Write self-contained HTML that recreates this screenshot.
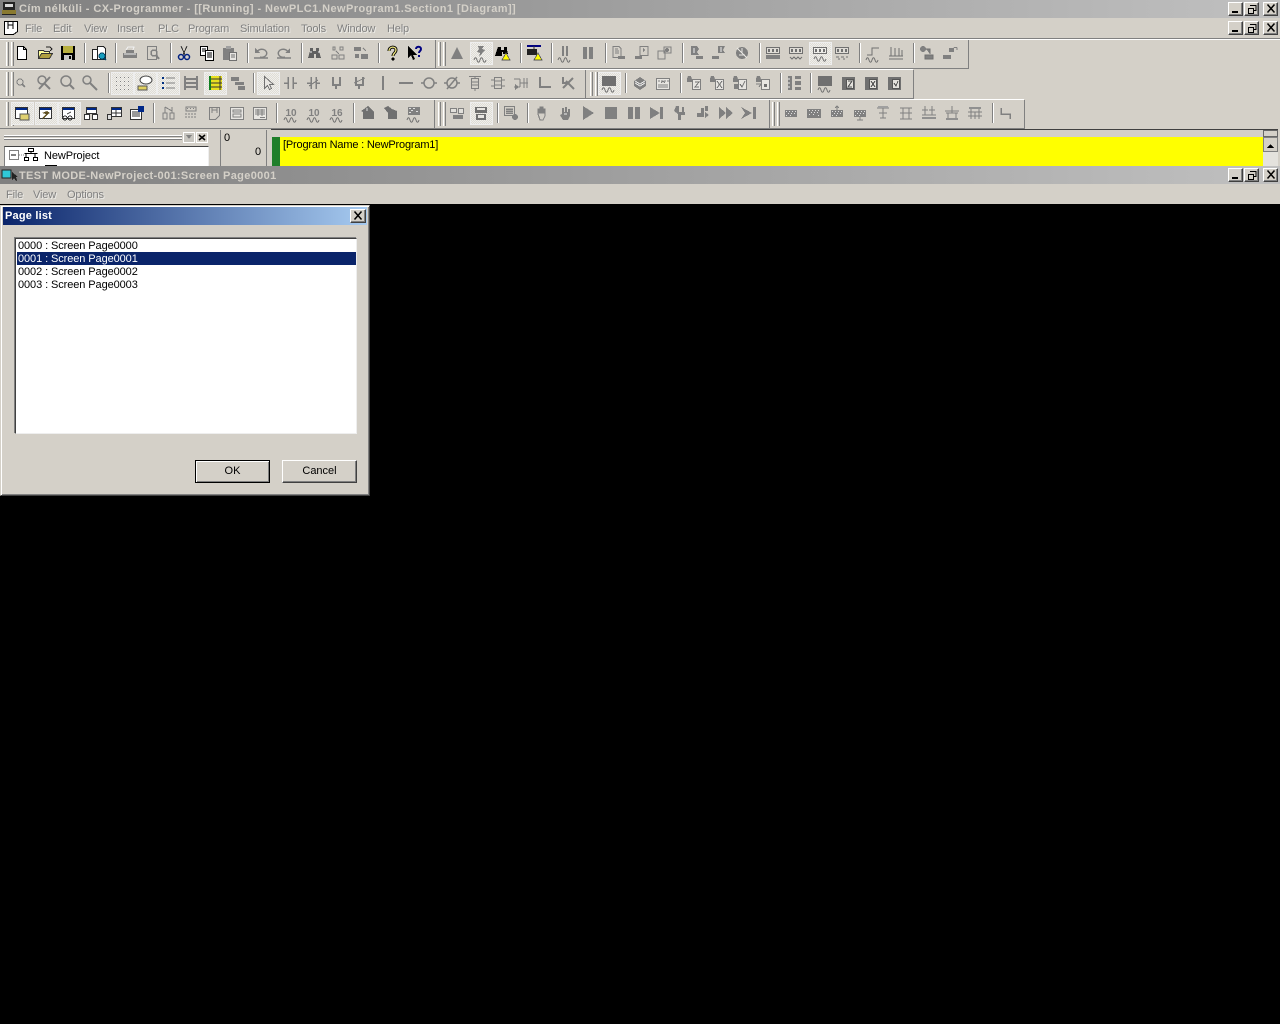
<!DOCTYPE html>
<html><head><meta charset="utf-8"><title>CX-Programmer</title>
<style>
html,body{margin:0;padding:0;background:#000;width:1280px;height:1024px;overflow:hidden}
body{position:relative;font-family:"Liberation Sans",sans-serif;font-size:11px;color:#000}
div{position:absolute;box-sizing:border-box}
.t{white-space:nowrap;line-height:13px;margin-top:1px}
.l{white-space:nowrap;line-height:13px;letter-spacing:-.09px;margin-top:1px}
.m{white-space:nowrap;line-height:13px;color:#808080;text-shadow:1px 1px 0 #ecebe7;letter-spacing:-.15px;margin-top:1px}
.tb{font-weight:bold;color:#d4d0c8;white-space:nowrap;line-height:14px}
.wb{width:15px;height:14px;background:#d4d0c8;border:1px solid;border-color:#fff #404040 #404040 #fff;box-shadow:inset -1px -1px 0 #808080}
.btn{background:#d4d0c8;text-align:center;line-height:21px}
svg{position:absolute;left:0;top:0}
</style></head><body>
<div style="left:0;top:0;width:1280px;height:204px;background:#d4d0c8"></div>
<div style="left:0;top:0;width:1280px;height:18px;background:linear-gradient(90deg,#808080,#c0c0c0)"></div>
<div class="tb" style="left:19px;top:2px;letter-spacing:.42px">Cím nélküli - CX-Programmer - [[Running] - NewPLC1.NewProgram1.Section1 [Diagram]]</div>
<div class="m" style="left:25px;top:22px">File</div><div class="m" style="left:53px;top:22px">Edit</div><div class="m" style="left:84px;top:22px">View</div><div class="m" style="left:117px;top:22px">Insert</div><div class="m" style="left:158px;top:22px">PLC</div><div class="m" style="left:188px;top:22px">Program</div><div class="m" style="left:240px;top:22px">Simulation</div><div class="m" style="left:301px;top:22px">Tools</div><div class="m" style="left:337px;top:22px">Window</div><div class="m" style="left:387px;top:22px">Help</div>
<div style="left:0;top:38px;width:1280px;height:1px;background:#808080"></div>
<div style="left:0;top:39px;width:1280px;height:1px;background:#fff"></div>
<div style="left:0;top:166px;width:1280px;height:18px;background:linear-gradient(90deg,#808080,#c0c0c0)"></div>
<div class="tb" style="left:19px;top:169px;letter-spacing:.34px">TEST MODE-NewProject-001:Screen Page0001</div>
<div class="m" style="left:6px;top:188px">File</div><div class="m" style="left:33px;top:188px">View</div><div class="m" style="left:67px;top:188px">Options</div>
<div style="left:220px;top:130px;width:47px;height:36px;border-left:1px solid #808080;border-right:1px solid #808080"></div>
<div class="t" style="left:224px;top:131px">0</div><div class="t" style="left:255px;top:145px">0</div>
<div style="left:272px;top:137px;width:8px;height:29px;background:#1f7f2a"></div>
<div style="left:280px;top:137px;width:984px;height:29px;background:#ff0"></div>
<div style="left:271px;top:129px;width:1007px;height:1px;background:#404040"></div>
<div class="t" style="left:283px;top:138px;color:#000;letter-spacing:-.18px">[Program Name : NewProgram1]</div>
<div style="left:4px;top:146px;width:205px;height:20px;background:#fff;border-top:1px solid #404040;border-left:1px solid #808080;border-right:1px solid #eee"></div>
<div class="l" style="left:44px;top:149px">NewProject</div>
<div style="left:0;top:204px;width:1280px;height:820px;background:#000"></div>
<div style="left:0;top:205px;width:370px;height:291px;background:#d4d0c8;border:1px solid;border-color:#d4d0c8 #404040 #404040 #d4d0c8;box-shadow:inset 1px 1px 0 #fff,inset -1px -1px 0 #808080"></div>
<div style="left:3px;top:207px;width:364px;height:18px;background:linear-gradient(90deg,#0a246a,#a6caf0)"></div>
<div class="tb" style="left:5px;top:209px;color:#fff;letter-spacing:.2px">Page list</div>
<div class="wb" style="left:350px;top:209px;width:16px"></div>
<div style="left:15px;top:238px;width:342px;height:196px;background:#fff;border:1px solid;border-color:#404040 #eee #eee #404040;box-shadow:-1px -1px 0 #808080"></div>
<div style="left:17px;top:252px;width:339px;height:13px;background:#0a246a"></div>
<div class="l" style="left:18px;top:239px">0000 : Screen Page0000</div>
<div class="l" style="left:18px;top:252px;color:#fff">0001 : Screen Page0001</div>
<div class="l" style="left:18px;top:265px">0002 : Screen Page0002</div>
<div class="l" style="left:18px;top:278px">0003 : Screen Page0003</div>
<div class="btn" style="left:195px;top:460px;width:75px;height:23px;border:1px solid #000;box-shadow:inset 1px 1px 0 #fff,inset -1px -1px 0 #808080">OK</div>
<div class="btn" style="left:282px;top:460px;width:75px;height:23px;border:1px solid;border-color:#fff #404040 #404040 #fff;box-shadow:inset -1px -1px 0 #808080;line-height:21px">Cancel</div>
<div class="wb" style="left:1228px;top:2px"></div><div class="wb" style="left:1244px;top:2px"></div><div class="wb" style="left:1263px;top:2px"></div>
<div class="wb" style="left:1228px;top:21px"></div><div class="wb" style="left:1244px;top:21px"></div><div class="wb" style="left:1263px;top:21px"></div>
<div class="wb" style="left:1228px;top:168px"></div><div class="wb" style="left:1244px;top:168px"></div><div class="wb" style="left:1263px;top:168px"></div>

<svg width="1280" height="1024" viewBox="0 0 1280 1024" shape-rendering="crispEdges">
<defs>
<pattern id="dither" width="2" height="2" patternUnits="userSpaceOnUse"><rect width="2" height="2" fill="#dedcd6"/><rect width="1" height="1" fill="#f0efeb"/><rect x="1" y="1" width="1" height="1" fill="#f0efeb"/></pattern>
<g id="wmin"><rect x="3" y="9" width="6" height="2" fill="#000"/></g>
<g id="wres"><path d="M5 3.500h6v5h-2M3.500 6.500h5v5h-5z" fill="none" stroke="#000"/><path d="M5 3h6v1H5zM3 6h6v1H3z"/></g>
<g id="wx"><path d="M3.500 2.500l7 8M10.500 2.500l-7 8" stroke="#000" stroke-width="1.500" fill="none" shape-rendering="auto"/></g>
<g id="print"><path d="M4 5h8v3H4zM1 8h14v5H1z" fill="#808080"/><path d="M2 9h12M4 5l2-3h6l-1 3" stroke="#eee" fill="none"/></g>
<g id="prev"><path d="M2.500 1.500h9v13h-9z" fill="#d4d0c8" stroke="#808080"/><circle cx="9" cy="8" r="3" fill="none" stroke="#808080" stroke-width="1.500"/><path d="M11 10l3 4" stroke="#808080" stroke-width="2"/></g>
<g id="undo"><path d="M4 7a5 4 0 1 1 3 5M1 13h14" fill="none" stroke="#808080" stroke-width="1.400" shape-rendering="auto"/><path d="M2 3v5h5z" fill="#808080"/></g>
<g id="redo"><path d="M12 7a5 4 0 1 0-3 5M1 13h14" fill="none" stroke="#808080" stroke-width="1.400" shape-rendering="auto"/><path d="M14 3v5H9z" fill="#808080"/></g>
<g id="bino"><path d="M3 3h3v3h3V3h3v3l2 7H9V9H7v4H1l2-7z" fill="#606060"/><path d="M3 7h2M11 7h2" stroke="#eee"/></g>
<g id="r1"><path d="M3 2h2v3H3zM10 2h3v3h-3zM2 10h5v4H2zM9 10h5v4H9z" fill="none" stroke="#808080"/><path d="M6 6l3 3" stroke="#808080"/></g>
<g id="r2"><path d="M1 2h7v4H1zM8 9h7v5H8zM2 9h4v4H2z" fill="#808080"/><path d="M10 3l3 3" stroke="#808080"/></g>
<g id="tri"><path d="M8 2l6 12H2z" fill="#808080"/></g>
<g id="wave"><path d="M1 15c1-3 2-3 3 0s2 3 3 0 2-3 3 0 2 3 3 0" fill="none" stroke="#707070" shape-rendering="auto"/></g>
<g id="bolt"><path d="M5 1h6L9 4l3 1-6 7 1-4-3-1 2-3z" fill="#808080"/><use href="#wave"/></g>
<g id="pause2"><path d="M5 1h2v10H5zM9 1h2v10H9z" fill="#808080"/><use href="#wave"/></g>
<g id="pp"><path d="M3 2h4v12H3zM9 2h4v12H9z" fill="#808080"/></g>
<g id="d1"><path d="M3 1.500h6l2 2v9H3z" fill="none" stroke="#808080"/><path d="M5 4h3M5 6h4M5 8h4" stroke="#808080"/><path d="M8 11h7v3H8z" fill="#808080"/></g>
<g id="d2"><path d="M6 1.500h8v9H6z" fill="none" stroke="#808080"/><path d="M1 11h7v3H1zM9 3l2 2-2 2z" fill="#808080"/></g>
<g id="d3"><path d="M1 6h7v8H1zM7 2h7v6H7z" fill="none" stroke="#808080"/><circle cx="10" cy="5" r="2" fill="#808080"/></g>
<g id="s1"><path d="M3 1h6l2 3-2 3 2 3H3z" fill="#808080"/><path d="M8 11h7v3H8z" fill="#808080"/><path d="M6 3v5" stroke="#eee"/></g>
<g id="s2"><path d="M7 1h7l-2 4 2 3H7z" fill="#808080"/><path d="M1 11h7v3H1z" fill="#808080"/><path d="M10 2v5" stroke="#eee"/></g>
<g id="s3"><circle cx="8" cy="8" r="6" fill="#808080"/><path d="M3 3l10 10M5 10h6M8 3v5" stroke="#e8e6e2"/></g>
<g id="rb"><path d="M1 2h14v7H1z" fill="#fff" opacity=".25"/><path d="M1.500 2.500h13v6h-13z" fill="none" stroke="#707070"/><path d="M3 4h2v3H3zM7 4h2v3H7zM11 4h2v3h-2z" fill="#707070"/></g>
<g id="rb1"><use href="#rb"/><path d="M1 10h14v4H1z" fill="#808080"/></g>
<g id="rb2"><use href="#rb"/><path d="M2 12l2 2 2-2 2 2 2-2 2 2 2-2" fill="none" stroke="#707070" shape-rendering="auto"/></g>
<g id="rb3"><use href="#rb"/><use href="#wave" transform="translate(1 -1)"/></g>
<g id="rb4"><use href="#rb"/><path d="M2 12h3M7 12h3M12 12h2M4 14h2M9 14h2" stroke="#707070"/></g>
<g id="step"><path d="M2 10h5V3h7" fill="none" stroke="#707070"/><use href="#wave"/></g>
<g id="steps"><path d="M3 2v9M7 3v8M11 3v8M14 5v6M1 11h14" stroke="#707070" fill="none"/><path d="M1 14h14" stroke="#707070"/></g>
<g id="lock1"><circle cx="4" cy="4" r="3" fill="#808080"/><path d="M7 4h4v5M6 10h8v4H6z" stroke="#707070" fill="#808080"/></g>
<g id="lock2"><path d="M7 3h5v4H7z" fill="#808080"/><path d="M12 3a2 2 0 0 1 3 0v2" stroke="#808080" fill="none"/><path d="M1 10h8v4H1z" fill="#808080"/></g>
<g id="mag" fill="none" stroke="#808080"><circle cx="7" cy="7" r="3"/><path d="M9 9l3 3" stroke-width="2"/></g>
<g id="magx" fill="none" stroke="#808080" stroke-width="1.500" shape-rendering="auto"><circle cx="6" cy="5" r="4"/><path d="M3 14L14 2M8 8l6 6" stroke-width="2"/></g>
<g id="magl" fill="none" stroke="#808080" stroke-width="1.500" shape-rendering="auto"><circle cx="7" cy="6" r="5"/><path d="M11 10l4 4" stroke-width="2"/></g>
<g id="magm" fill="none" stroke="#808080" stroke-width="1.500" shape-rendering="auto"><circle cx="5" cy="5" r="4"/><path d="M8 8l7 7" stroke-width="2"/></g>
<g id="grid" fill="#808080"><path d="M2 2h1v1H2zM6 2h1v1H6zM10 2h1v1h-1zM14 2h1v1h-1zM2 6h1v1H2zM6 6h1v1H6zM10 6h1v1h-1zM14 6h1v1h-1zM2 10h1v1H2zM6 10h1v1H6zM10 10h1v1h-1zM14 10h1v1h-1zM2 14h1v1H2zM6 14h1v1H6zM10 14h1v1h-1zM14 14h1v1h-1z"/></g>
<g id="cmt"><ellipse cx="9" cy="5" rx="6" ry="4" fill="#fff" stroke="#444" shape-rendering="auto"/><path d="M1 11h9v4H1z" fill="#e0d060" stroke="#555"/></g>
<g id="lst"><path d="M2 2h2v2H2zM2 7h2v2H2zM2 12h2v2H2z" fill="#003080"/><path d="M6 3h9M6 8h9M6 13h9" stroke="#808080"/></g>
<g id="lad"><path d="M2 1v14M14 1v14M2 4h12M2 8h12M2 12h12" stroke="#808080" stroke-width="2"/></g>
<g id="lady"><path d="M2 1h2v14H2z" fill="#108020"/><path d="M4 1h11v14H4z" fill="#e8e020"/><path d="M4 4h11M4 8h11M4 12h11" stroke="#333"/><path d="M13 1v14" stroke="#333"/></g>
<g id="tree"><path d="M1 2h8v4H1zM5 7h9v3H5zM8 11h7v4H8z" fill="#808080"/></g>
<g id="arrow"><path d="M4.500 1.500v12l3-3 2 4 2-1-2-4h4z" fill="#e8e6e2" stroke="#707070"/></g>
<g id="no"><path d="M5 2v12M10 2v12M1 8h4M10 8h4" stroke="#808080" stroke-width="1.500"/></g>
<g id="nc"><use href="#no"/><path d="M3 11l9-6" stroke="#808080"/></g>
<g id="hno"><path d="M4 2v9M11 2v9M4 10h7M7 10v4" stroke="#808080" stroke-width="2"/></g>
<g id="hnc"><use href="#hno"/><path d="M2 8l11-5" stroke="#808080"/></g>
<g id="vl"><path d="M7 1h2v14H7z" fill="#808080"/></g>
<g id="hl"><path d="M1 8h14" stroke="#808080" stroke-width="2"/></g>
<g id="coil" fill="none" stroke="#808080" stroke-width="1.500" shape-rendering="auto"><circle cx="8" cy="8" r="5"/><path d="M0 8h3M13 8h3"/></g>
<g id="coiln" fill="none" stroke="#808080" stroke-width="1.500" shape-rendering="auto"><circle cx="8" cy="8" r="5"/><path d="M0 8h3M13 8h3M3 14L13 2"/></g>
<g id="inst"><path d="M4.500 3.500h7v10h-7zM4 7h8M4 10h8M2 1.500h12M8 1v2M8 14v2" fill="none" stroke="#808080"/></g>
<g id="inst2"><path d="M4.500 2.500h7v11h-7zM4 6h8M4 10h8M1 5h3M1 11h3M12 5h3M12 11h3" fill="none" stroke="#808080"/></g>
<g id="branch"><path d="M1 4h6M7 4v8M7 8h8M1 12h6" stroke="#808080" fill="none"/><path d="M11 3v10M14 3v10" stroke="#808080"/><path d="M2 9l4 3-4 3z" fill="#808080"/></g>
<g id="corner"><path d="M3 2v10h11" stroke="#808080" stroke-width="2" fill="none"/></g>
<g id="delx"><path d="M3 2v6h4M3 13l10-10M6 6l8 8" stroke="#808080" stroke-width="2" fill="none" shape-rendering="auto"/></g>
<g id="stk"><path d="M2 6l6-4 6 4v5l-6 4-6-4z" fill="#808080"/><path d="M3 8l5 3 5-3M3 6l5 3 5-3" stroke="#eee" fill="none"/></g>
<g id="tbl"><path d="M1.500 3.500h13v11h-13z" fill="#e8e6e2" stroke="#808080"/><path d="M3 6h2M6 6h2M9 6h2M12 6h2M3 10h10M3 12h10" stroke="#808080"/><path d="M6 8l2-2 2 2" stroke="#808080" fill="none"/></g>
<g id="bx1"><path d="M2 1h3l1 3v3H1V4z" fill="#808080"/><path d="M6.500 4.500h8v10h-8z" fill="#e8e6e2" stroke="#808080"/></g>
<g id="bz"><use href="#bx1"/><path d="M9 7h4l-4 5h4" stroke="#707070" fill="none"/></g>
<g id="bxx"><use href="#bx1"/><path d="M8 6l5 7M13 6l-5 7" stroke="#707070"/></g>
<g id="bck"><use href="#bx1"/><path d="M8 9l2 3 3-6" stroke="#707070" fill="none"/><path d="M2 9h4v5H2z" fill="#808080"/></g>
<g id="bmn"><use href="#bx1"/><path d="M9 9h3v3H9z" fill="#707070"/><path d="M1 9h5M4 12l2-3" stroke="#808080"/></g>
<g id="cols"><path d="M2 1h4v14H2z" fill="#808080"/><path d="M9 1h6v3H9zM9 6h6v4H9zM9 12h6v3H9z" fill="#808080"/><path d="M3 3v2M3 7v2M3 11v2" stroke="#eee"/></g>
<g id="dark1"><path d="M1 1h14v10H1z" fill="#707070"/><use href="#wave"/></g>
<g id="darkz"><path d="M2 2h13v13H2z" fill="#707070"/><path d="M6.500 4.500h7v9h-7z" fill="#e4e2dd" stroke="#555"/><path d="M8 6h4l-4 6h4" stroke="#555" fill="none"/></g>
<g id="darkx"><path d="M2 2h13v13H2z" fill="#707070"/><path d="M6.500 4.500h7v9h-7z" fill="#e4e2dd" stroke="#555"/><path d="M8 6l4 6M12 6l-4 6" stroke="#555"/></g>
<g id="darkc"><path d="M2 2h13v13H2z" fill="#707070"/><path d="M6.500 4.500h7v9h-7z" fill="#e4e2dd" stroke="#555"/><path d="M8 8l2 3 2-5" stroke="#555" fill="none"/></g>
<g id="win"><path d="M1.500 2.500h12v11h-12z" fill="#fff" stroke="#333"/><path d="M2 3h11v2H2z" fill="#002888"/></g>
<g id="winf"><use href="#win"/><path d="M6 9h9v6H6z" fill="#e0d070" stroke="#555"/></g>
<g id="winh"><use href="#win"/><path d="M4 8l5-2 3 2-2 1-5 5-1-1 4-4z" fill="#605020"/></g>
<g id="wing"><use href="#win"/><circle cx="4" cy="13" r="2" fill="none" stroke="#333"/><circle cx="9" cy="13" r="2" fill="none" stroke="#333"/><path d="M6 9l4-2" stroke="#333"/></g>
<g id="wins"><path d="M3.500 2.500h10v6h-10z" fill="#fff" stroke="#333"/><path d="M4 3h9v2H4z" fill="#002888"/><path d="M1.500 9.500h5v5h-5zM9.500 9.500h5v5h-5z" fill="#fff" stroke="#333"/></g>
<g id="wint"><path d="M5.500 2.500h10v9h-10z" fill="#fff" stroke="#333"/><path d="M6 3h9v2H6z" fill="#002888"/><path d="M10 5v6M6 8h9" stroke="#333"/><path d="M1.500 9.500h4v5h-4z" fill="#ddd" stroke="#333"/></g>
<g id="winp"><path d="M1.500 4.500h11v10h-11z" fill="#fff" stroke="#333"/><path d="M3 7h8M3 9h8M3 11h8" stroke="#333"/><path d="M9 1h6v6H9z" fill="#002888"/></g>
<g id="conn"><path d="M3 8h4v6H3zM10 8h4v6h-4z" fill="none" stroke="#808080"/><path d="M5 2v6M12 2v6M5 2l7 4" stroke="#808080"/></g>
<g id="wv2"><path d="M3 2h10v4H3z" fill="none" stroke="#808080"/><path d="M4 3h1v1H4zM7 3h1v1H7zM10 3h1v1h-1z" fill="#808080"/><path d="M2 9h12M2 12h12" stroke="#808080" stroke-dasharray="2 1"/></g>
<g id="pg"><path d="M3.500 2.500h10v8l-4 4h-6z" fill="none" stroke="#808080" stroke-width="1"/><path d="M6 2v6M6 5h5M11 2v6" stroke="#808080"/></g>
<g id="frm"><path d="M1.500 2.500h13v12h-13z" fill="#e8e6e2" stroke="#808080"/><path d="M4 5h8v2H4zM4 9h8v3H4z" fill="none" stroke="#808080"/></g>
<g id="frm2"><path d="M1.500 2.500h13v12h-13z" fill="#e8e6e2" stroke="#808080"/><path d="M3 5h10M3 7h10M3 9h10M6 4v7M10 4v7" stroke="#808080"/><path d="M8 12h5v1H8z" fill="#808080"/></g>
<g id="house"><path d="M8 1l6 6v7H3V7l-2-1 3-2z" fill="#707070"/><path d="M7 3v3" stroke="#ddd"/></g>
<g id="house2"><path d="M1 3l4-2 4 3 5 2v8H5V8z" fill="#707070"/></g>
<g id="scat"><path d="M2 2h12v8H2z" fill="#808080"/><path d="M3 3h2v1H3zM7 3h2v1H7zM5 5h2v1H5zM10 6h2v1h-2zM3 7h2v1H3z" fill="#ddd"/><use href="#wave"/></g>
<g id="h1"><path d="M1 3h7v5H1zM9 3h6v6H9zM4 10h10v4H4z" fill="#808080"/><path d="M2 4h5v3H2zM10 4h4v4h-4z" fill="#e2e0db"/></g>
<g id="h2"><path d="M2 2h12v6H2zM3 9h10v6H3z" fill="#707070"/><path d="M4 3h8v2H4zM5 10h6v3H5z" fill="#e8e6e2"/></g>
<g id="lsc"><path d="M1.500 1.500h10v9h-10z" fill="none" stroke="#808080"/><path d="M3 4h7M3 6h7M3 8h7" stroke="#808080" stroke-width="1.500"/><circle cx="12" cy="12" r="3" fill="#808080"/></g>
<g id="hand"><path d="M4 9V4h1v4h1V2h1v6h1V2h1v6h1V4h1v7l-2 4H6z" fill="none" stroke="#808080"/></g>
<g id="handd"><path d="M5 3h2v4h1V2h2v5h1V4h2v7l-2 4H6l-3-5 2-1z" fill="#808080"/><path d="M7 9h3" stroke="#eee"/></g>
<g id="play"><path d="M3 1l11 7-11 7z" fill="#808080"/></g>
<g id="stop"><path d="M2 2h12v12H2z" fill="#808080"/></g>
<g id="pau"><path d="M2 2h5v12H2zM9 2h5v12H9z" fill="#808080"/></g>
<g id="snext"><path d="M1 2l10 6-10 6zM11 2h3v12h-3z" fill="#808080"/></g>
<g id="sf1"><path d="M4 1h3v6h6v3H9v5H6V9L2 6z" fill="#808080"/><path d="M10 2h2v5h-2z" fill="#808080"/></g>
<g id="sf2"><path d="M2 8h4V3h3v9H2zM10 1h3v5h-3zM10 7l4 3-4 3z" fill="#808080"/></g>
<g id="ff"><path d="M1 2l7 6-7 6zM8 2l7 6-7 6z" fill="#808080"/></g>
<g id="tobar"><path d="M0 2l11 6L0 14l4-6zM12 2h3v12h-3z" fill="#808080"/></g>
<g id="bk1"><path d="M2 5h12v7H2z" fill="#808080"/><path d="M3 6h1v1H3zM6 6h1v1H6zM9 6h1v1H9zM12 6h1v1h-1zM5 8h1v1H5zM8 8h1v1H8zM11 8h1v1h-1zM3 10h1v1H3zM7 10h1v1H7z" fill="#ddd"/></g>
<g id="bk2"><path d="M1 4h14v9H1z" fill="#808080"/><path d="M3 5h1v1H3zM6 5h1v1H6zM9 5h1v1H9zM12 5h1v1h-1zM5 7h1v1H5zM8 7h1v1H8zM11 7h1v1h-1zM3 9h1v1H3zM7 9h1v1H7zM12 10h1v1h-1z" fill="#ddd"/></g>
<g id="bk3"><use href="#bk1"/><path d="M8 1v4M6 3l2-2 2 2" stroke="#808080" fill="none"/></g>
<g id="bk4"><use href="#bk1"/><path d="M8 12v3M5 15h6" stroke="#808080" fill="none"/></g>
<g id="t1"><path d="M2 3h12M8 3v10M4 8h8M5 13h6" stroke="#808080" fill="none"/><path d="M3 1h10v2H3z" fill="#a0a0a0"/></g>
<g id="t2"><path d="M2 3h12M5 3v5M11 3v5M2 8h12M5 8v6M11 8v6M2 14h12" stroke="#808080" fill="none"/></g>
<g id="t3"><path d="M4 1v9M11 1v9M1 5h6M8 5h6M1 10h14" stroke="#808080" fill="none"/><path d="M1 12h14v2H1z" fill="#909090"/></g>
<g id="t4"><path d="M8 1v7M2 8h12M4 8v6M12 8v6M1 6h14" stroke="#808080" fill="none"/><path d="M2 13h12v2H2z" fill="#909090"/></g>
<g id="t5"><path d="M2 2h12v2H2z" fill="#909090"/><path d="M4 4v10M12 4v10M1 7h14M1 11h14M8 7v7" stroke="#808080" fill="none"/></g>
<g id="retn"><path d="M3 3v6h9v5" stroke="#808080" fill="none" stroke-width="1.500"/></g>
<g id="new"><path d="M3.500 1.500h6l3 3v10h-9z" fill="#fff" stroke="#000"/><path d="M9.500 1.500v3h3" fill="none" stroke="#000"/></g>
<g id="open"><path d="M1.500 5.500h5l1 1h5v7h-11z" fill="#ffff99" stroke="#333"/><path d="M1.500 13.500l3-5h11l-3 5z" fill="#b0a040" stroke="#333"/><path d="M9 2h4l2 2-2 2" fill="none" stroke="#222"/></g>
<g id="save"><path d="M1 1h14v14H1z" fill="#000"/><path d="M3 1h10v7H3z" fill="#b8b040"/><path d="M4 10h8v5H4z" fill="#c8c8c8"/><path d="M9 11h2v3H9z" fill="#000"/></g>
<g id="find"><path d="M1.500 4.500h6v10h-6z" fill="#fff" stroke="#222"/><path d="M6.500 1.500h6l2 2v11h-8z" fill="#fff" stroke="#222"/><circle cx="11" cy="11" r="3" fill="#18a0c0" stroke="#046"/><path d="M13 13l2 2" stroke="#046" stroke-width="2"/></g>
<g id="cut"><path d="M5 1l4 9M11 1l-4 9" stroke="#333" fill="none"/><circle cx="5" cy="12" r="2.500" fill="none" stroke="#002080" stroke-width="1.500" shape-rendering="auto"/><circle cx="11" cy="12" r="2.500" fill="none" stroke="#002080" stroke-width="1.500" shape-rendering="auto"/></g>
<g id="copy"><path d="M1.500 1.500h7v9h-7z" fill="#fff" stroke="#000"/><path d="M6.500 5.500h8v10h-8z" fill="#fff" stroke="#000"/><path d="M3 4h4M3 6h3M8 8h5M8 10h5M8 12h5" stroke="#000"/></g>
<g id="paste"><path d="M1 3h11v12H1z" fill="#808080"/><path d="M4 1h5v3H4z" fill="#a0a0a0"/><path d="M7.500 7.500h7v8h-7z" fill="#e8e6e2" stroke="#707070"/><path d="M9 10h4M9 12h4" stroke="#707070"/></g>
<g id="help"><path d="M5 6c0-5 7-5 7-1 0 3-3 3-3 6" fill="none" stroke="#000" stroke-width="3" shape-rendering="auto"/><path d="M5 6c0-5 7-5 7-1 0 3-3 3-3 6" fill="none" stroke="#f0e880" stroke-width="1.300" shape-rendering="auto"/><circle cx="9" cy="14" r="1.500"/></g>
<g id="what"><path d="M1 1v12l3-3 2 5 2-1-2-4h4z" fill="#000"/><path d="M9 4c0-3 5-3 5 0 0 2-2 2-2 4" fill="none" stroke="#000080" stroke-width="2" shape-rendering="auto"/><path d="M11 10h2v2h-2z" fill="#000080"/></g>
<g id="binoy"><path d="M3 2h3v3h3V2h3v3l1 4H8V7H7v4H0l2-6z" fill="#000"/><path d="M11 8l4 7H7z" fill="#ff0" stroke="#555" stroke-width=".8"/></g>
<g id="plcy"><path d="M1 1h14" stroke="#000080" stroke-width="2"/><path d="M8 1v3" stroke="#333"/><path d="M1 4h10v6H1z" fill="#222"/><path d="M12 8l4 7H8z" fill="#ff0" stroke="#555" stroke-width=".8"/></g>
</defs>

<g>
<path d="M3 2h12v8H3z" fill="#222"/><path d="M5 4h8v3H5z" fill="#d8d8d8"/><path d="M2 10h14v4H2z" fill="#8a7a30"/><path d="M2 14h14v1H2z" fill="#222"/>
<path d="M4.500 21.500h13v10l-4 3h-9z" fill="#fff" stroke="#000"/><path d="M8 22v7M8 25h5M13 22v7" stroke="#000"/>
</g>
<use href="#wmin" x="1229" y="2"/><use href="#wres" x="1245" y="2"/><use href="#wx" x="1264" y="2"/>
<use href="#wmin" x="1229" y="21"/><use href="#wres" x="1245" y="21"/><use href="#wx" x="1264" y="21"/>
<use href="#wmin" x="1229" y="168"/><use href="#wres" x="1245" y="168"/><use href="#wx" x="1264" y="168"/>
<use href="#wx" x="351" y="209"/>
<path d="M2 170h9v8H2z" fill="#30c8d8" stroke="#222"/><path d="M12 172v8l2-2 2 3 1-1-1-3h2z" fill="#222"/>

<g fill="none">
<path d="M0 68.500h968M0 98.500h913M0 128.500h1024" stroke="#808080"/>
<path d="M0 69.500h913M0 99.500h1024" stroke="#fff"/>
<path d="M968.500 40v29M913.500 70v29M1024.500 100v29" stroke="#808080"/>
<path d="M435.500 40v28M585.500 70v28M434.500 100v28M769.500 100v28" stroke="#808080"/>
</g>
<g fill="none">
<path d="M6.500 42v24M11.500 42v24M6.500 72v24M11.500 72v24M6.500 102v24M11.500 102v24M438.500 42v24M443.500 42v24M590.500 72v24M595.500 72v24M438.500 102v24M443.500 102v24M772.500 102v24M777.500 102v24" stroke="#fff" stroke-width="1"/>
<path d="M8.500 42v24M13.500 42v24M8.500 72v24M13.500 72v24M8.500 102v24M13.500 102v24M440.500 42v24M445.500 42v24M592.500 72v24M597.500 72v24M440.500 102v24M445.500 102v24M774.500 102v24M779.500 102v24" stroke="#808080" stroke-width="1"/>
</g>
<g fill="none" stroke="#808080">
<path d="M84.500 43v20M115.500 43v20M170.500 43v20M247.500 43v20M301.500 43v20M378.500 43v20M520.500 43v20M551.500 43v20M605.500 43v20M682.500 43v20M759.500 43v20M859.500 43v20M913.500 43v20"/>
<path d="M108.500 73v20M253.500 73v20M625.500 73v20M680.500 73v20M780.500 73v20M810.500 73v20"/>
<path d="M153.500 103v20M276.500 103v20M353.500 103v20M497.500 103v20M527.500 103v20M992.500 103v20"/>
</g>
<g fill="none" stroke="#fff">
<path d="M85.500 43v20M116.500 43v20M171.500 43v20M248.500 43v20M302.500 43v20M379.500 43v20M521.500 43v20M552.500 43v20M606.500 43v20M683.500 43v20M760.500 43v20M860.500 43v20M914.500 43v20"/>
<path d="M109.500 73v20M254.500 73v20M626.500 73v20M681.500 73v20M781.500 73v20M811.500 73v20"/>
<path d="M154.500 103v20M277.500 103v20M354.500 103v20M498.500 103v20M528.500 103v20M993.500 103v20"/>
</g>
<g fill="url(#dither)" stroke="#eee">
<rect x="470.500" y="42.500" width="22" height="22"/><rect x="809.500" y="42.500" width="22" height="22"/>
<rect x="111.500" y="72.500" width="22" height="22"/><rect x="134.500" y="72.500" width="22" height="22"/><rect x="157.500" y="72.500" width="22" height="22"/><rect x="204.500" y="72.500" width="22" height="22"/><rect x="257.500" y="72.500" width="22" height="22"/><rect x="598.500" y="72.500" width="22" height="22"/>
<rect x="11.500" y="102.500" width="22" height="22"/><rect x="35.500" y="102.500" width="22" height="22"/><rect x="58.500" y="102.500" width="22" height="22"/><rect x="470.500" y="102.500" width="22" height="22"/>
</g>
<use href="#new" x="14" y="45"/><use href="#open" x="37" y="45"/><use href="#save" x="60" y="45"/><use href="#find" x="91" y="45"/>
<use href="#print" x="122" y="45"/><use href="#prev" x="145" y="45"/><use href="#cut" x="176" y="45"/><use href="#copy" x="199" y="45"/><use href="#paste" x="222" y="45"/>
<use href="#undo" x="253" y="45"/><use href="#redo" x="276" y="45"/><use href="#bino" x="307" y="45"/><use href="#r1" x="330" y="45"/><use href="#r2" x="353" y="45"/>
<use href="#help" x="384" y="45"/><use href="#what" x="407" y="45"/>
<use href="#tri" x="449" y="45"/><use href="#bolt" x="473" y="45"/><use href="#binoy" x="495" y="45"/><use href="#plcy" x="526" y="45"/>
<use href="#pause2" x="557" y="45"/><use href="#pp" x="580" y="45"/><use href="#d1" x="610" y="45"/><use href="#d2" x="634" y="45"/><use href="#d3" x="657" y="45"/>
<use href="#s1" x="688" y="45"/><use href="#s2" x="711" y="45"/><use href="#s3" x="734" y="45"/>
<use href="#rb1" x="765" y="45"/><use href="#rb2" x="788" y="45"/><use href="#rb3" x="812" y="45"/><use href="#rb4" x="834" y="45"/>
<use href="#step" x="865" y="45"/><use href="#steps" x="888" y="45"/><use href="#lock1" x="919" y="45"/><use href="#lock2" x="942" y="45"/>
<use href="#mag" x="13" y="75"/><use href="#magx" x="36" y="75"/><use href="#magl" x="59" y="75"/><use href="#magm" x="82" y="75"/>
<use href="#grid" x="114" y="75"/><use href="#cmt" x="137" y="75"/><use href="#lst" x="160" y="75"/><use href="#lad" x="183" y="75"/><use href="#lady" x="207" y="75"/><use href="#tree" x="230" y="75"/>
<use href="#arrow" x="260" y="75"/><use href="#no" x="283" y="75"/><use href="#nc" x="306" y="75"/><use href="#hno" x="329" y="75"/><use href="#hnc" x="352" y="75"/>
<use href="#vl" x="375" y="75"/><use href="#hl" x="398" y="75"/><use href="#coil" x="421" y="75"/><use href="#coiln" x="444" y="75"/><use href="#inst" x="467" y="75"/><use href="#inst2" x="490" y="75"/><use href="#branch" x="513" y="75"/><use href="#corner" x="537" y="75"/><use href="#delx" x="560" y="75"/>
<use href="#dark1" x="601" y="75"/><use href="#stk" x="632" y="75"/><use href="#tbl" x="655" y="75"/>
<use href="#bz" x="686" y="75"/><use href="#bxx" x="709" y="75"/><use href="#bck" x="732" y="75"/><use href="#bmn" x="755" y="75"/><use href="#cols" x="786" y="75"/>
<use href="#dark1" x="817" y="75"/><use href="#darkz" x="840" y="75"/><use href="#darkx" x="863" y="75"/><use href="#darkc" x="886" y="75"/>
<use href="#winf" x="14" y="105"/><use href="#winh" x="38" y="105"/><use href="#wing" x="61" y="105"/><use href="#wins" x="83" y="105"/><use href="#wint" x="106" y="105"/><use href="#winp" x="129" y="105"/>
<use href="#conn" x="160" y="105"/><use href="#wv2" x="183" y="105"/><use href="#pg" x="206" y="105"/><use href="#frm" x="229" y="105"/><use href="#frm2" x="252" y="105"/>
<g font-family="'Liberation Sans',sans-serif" font-size="10" font-weight="bold" fill="#808080" text-anchor="middle" shape-rendering="auto"><text x="291" y="116">10</text><text x="314" y="116">10</text><text x="337" y="116">16</text></g>
<use href="#wave" x="283" y="105"/><use href="#wave" x="306" y="105"/><use href="#wave" x="329" y="105"/>
<use href="#house" x="360" y="105"/><use href="#house2" x="383" y="105"/><use href="#scat" x="406" y="105"/>
<use href="#h1" x="449" y="105"/><use href="#h2" x="473" y="105"/><use href="#lsc" x="503" y="105"/>
<use href="#hand" x="534" y="105"/><use href="#handd" x="557" y="105"/><use href="#play" x="580" y="105"/><use href="#stop" x="603" y="105"/><use href="#pau" x="626" y="105"/><use href="#snext" x="649" y="105"/><use href="#sf1" x="672" y="105"/><use href="#sf2" x="695" y="105"/><use href="#ff" x="718" y="105"/><use href="#tobar" x="741" y="105"/>
<use href="#bk1" x="783" y="105"/><use href="#bk2" x="806" y="105"/><use href="#bk3" x="829" y="105"/><use href="#bk4" x="852" y="105"/>
<use href="#t1" x="875" y="105"/><use href="#t2" x="898" y="105"/><use href="#t3" x="921" y="105"/><use href="#t4" x="944" y="105"/><use href="#t5" x="967" y="105"/><use href="#retn" x="998" y="105"/>
<path d="M4 135.500h178M4 138.500h178" stroke="#fff"/><path d="M4 136.500h178M4 139.500h178" stroke="#808080"/>
<rect x="183.500" y="132.500" width="11" height="10" fill="#c8c6c0" stroke="#fff"/><path d="M186 135h6l-3 4z" fill="#808080"/>
<rect x="196.500" y="132.500" width="11" height="10" fill="#d4d0c8" stroke="#fff"/><path d="M199 135l6 5M205 135l-6 5" stroke="#000" stroke-width="1.500" shape-rendering="auto"/>
<rect x="9.500" y="150.500" width="9" height="9" fill="#fff" stroke="#808080"/><path d="M11 155h5" stroke="#000"/><path d="M19 155h5" stroke="#808080" stroke-dasharray="1 1"/>
<path d="M28.500 148.500h5v3h-5zM24.500 157.500h4v3h-4zM33.500 157.500h4v3h-4zM24.500 153.500h13M31 151v3M26 153v4M35 153v4" fill="none" stroke="#000"/>
<path d="M45 165h12v1H45z" fill="#000"/>
<rect x="1263.500" y="130.500" width="14" height="6" fill="#d4d0c8" stroke="#666"/>
<rect x="1263.500" y="137.500" width="14" height="14" fill="#d4d0c8" stroke="#808080"/><path d="M1267 148h7l-3.500-4z" fill="#000"/>
<rect x="1263" y="152" width="15" height="14" fill="#e4e2dd"/>
</svg>
</body></html>
